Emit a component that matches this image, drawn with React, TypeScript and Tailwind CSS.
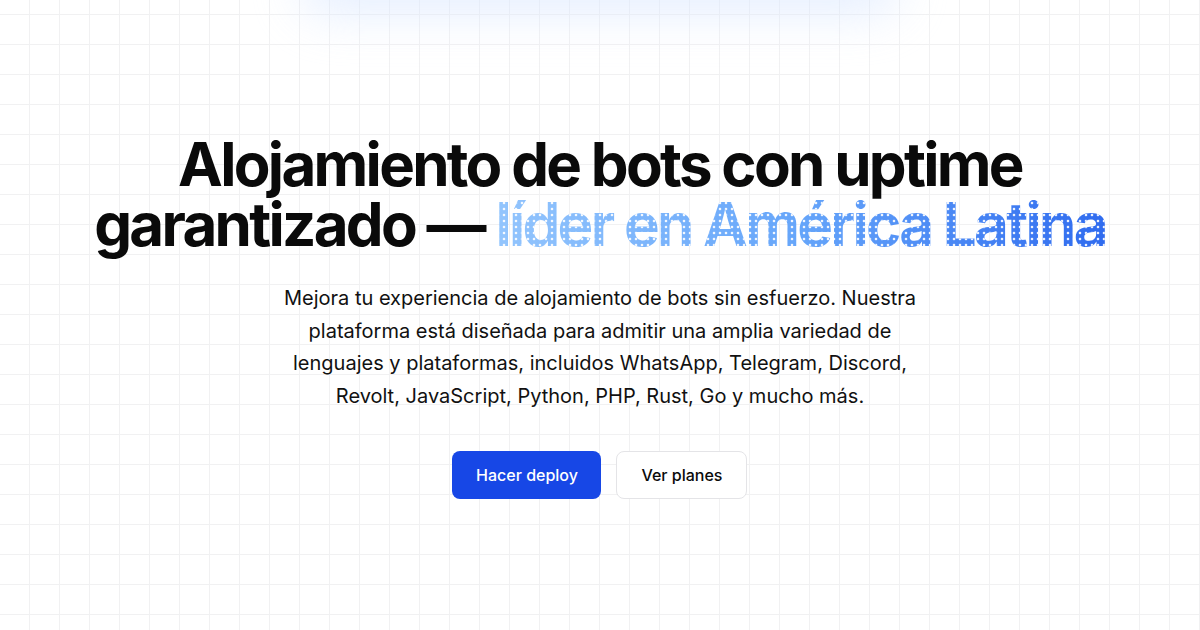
export default function App() {
  return (
    <div
      className="relative min-h-[630px] w-full overflow-hidden bg-white flex flex-col items-center pt-[134px]"
      style={{ fontFamily: "Inter, 'Noto Sans', sans-serif" }}
    >
      {/* faint grid backdrop */}
      <div className="pointer-events-none absolute inset-0 bg-[linear-gradient(to_right,#f1f1f2_1px,transparent_1px),linear-gradient(to_bottom,#f1f1f2_1px,transparent_1px)] bg-[size:30px_30px] bg-[position:29px_14px]" />
      {/* soft glow at the top */}
      <div className="pointer-events-none absolute left-1/2 top-[-46px] h-[60px] w-[600px] -translate-x-1/2 rounded-full bg-[#dbe8ff] opacity-70 blur-xl" />

      <div className="relative flex flex-col items-center text-center">
        <h1 className="text-[60px] font-bold leading-[60px] tracking-[-0.045em] text-[#0a0a0a]">
          Alojamiento de bots con uptime
          <br />
          garantizado —{" "}
          <span className="bg-[radial-gradient(circle,rgba(255,255,255,0.9)_0.9px,transparent_1.7px),linear-gradient(to_right,#93c5fd,#65a5fa_50%,#2f6bef)] bg-[size:6px_6px,100%_100%] bg-clip-text text-transparent">
            líder en América Latina
          </span>
        </h1>

        <p className="mt-[28px] max-w-[640px] text-[20px] leading-[32.5px] text-[#111111]">
          Mejora tu experiencia de alojamiento de bots sin esfuerzo. Nuestra
          plataforma está diseñada para admitir una amplia variedad de
          lenguajes y plataformas, incluidos WhatsApp, Telegram, Discord,
          Revolt, JavaScript, Python, PHP, Rust, Go y mucho más.
        </p>

        <div className="mt-[39px] flex items-center gap-[15px]">
          <button className="h-12 w-[149px] rounded-lg bg-[#1747e6] text-[16px] font-medium text-white">
            Hacer deploy
          </button>
          <button className="h-12 w-[131px] rounded-lg border border-[#e4e4e7] bg-white text-[16px] font-medium text-[#0a0a0a]">
            Ver planes
          </button>
        </div>
      </div>
    </div>
  );
}
